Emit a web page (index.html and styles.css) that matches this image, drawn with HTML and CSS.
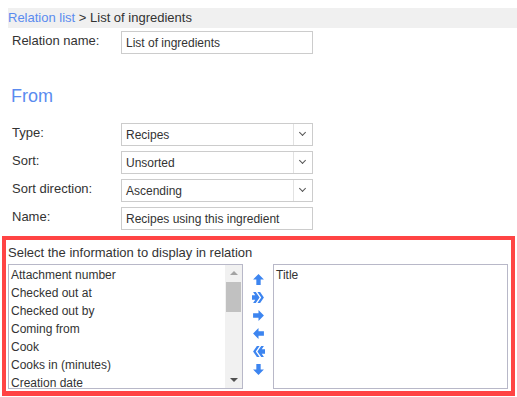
FILE: index.html
```html
<!DOCTYPE html>
<html lang="en">

<head>
    <meta charset="UTF-8">
    <title>Relation - List of ingredients</title>
    <link rel="stylesheet" href="styles.css">
</head>

<body>
    <div class="breadcrumb">
        <a href="#">Relation list</a> &gt; List of ingredients
    </div>
    <div class="row">
        <label>Relation name:</label>
        <input type="text" value="List of ingredients">
    </div>

    <h2>From</h2>

    <div class="row">
        <label>Type:</label>
        <div class="select"><span>Recipes</span><i></i></div>
    </div>
    <div class="row">
        <label>Sort:</label>
        <div class="select"><span>Unsorted</span><i></i></div>
    </div>
    <div class="row">
        <label>Sort direction:</label>
        <div class="select"><span>Ascending</span><i></i></div>
    </div>
    <div class="row">
        <label>Name:</label>
        <input type="text" value="Recipes using this ingredient">
    </div>

    <div class="picker">
        <div class="picker-title">Select the information to display in relation</div>
        <div class="picker-body">
            <div class="list">
                <div class="items">
                    <div>Attachment number</div>
                    <div>Checked out at</div>
                    <div>Checked out by</div>
                    <div>Coming from</div>
                    <div>Cook</div>
                    <div>Cooks in (minutes)</div>
                    <div>Creation date</div>
                </div>
                <div class="scrollbar">
                    <span class="up"></span>
                    <span class="thumb"></span>
                    <span class="down"></span>
                </div>
            </div>
            <div class="moves">
                <svg viewBox="0 0 12 12"><path d="M6 1 L11 6 H8 V11 H4 V6 H1 Z" /></svg>
                <svg viewBox="0 0 12 12"><path d="M0 4 H3 L1 1 H3.5 L7 6 L3.5 11 H1 L3 8 H0 Z M5 1 H7.5 L11 6 L7.5 11 H5 L8.5 6 Z" /></svg>
                <svg viewBox="0 0 12 12"><path d="M11 6 L6 11 V8 H1 V4 H6 V1 Z" /></svg>
                <svg viewBox="0 0 12 12"><path d="M1 6 L6 1 V4 H11 V8 H6 V11 Z" /></svg>
                <svg viewBox="0 0 12 12"><path d="M12 4 H9 L11 1 H8.5 L5 6 L8.5 11 H11 L9 8 H12 Z M7 1 H4.5 L1 6 L4.5 11 H7 L3.5 6 Z" /></svg>
                <svg viewBox="0 0 12 12"><path d="M6 11 L1 6 H4 V1 H8 V6 H11 Z" /></svg>
            </div>
            <div class="list chosen">
                <div class="items">
                    <div>Title</div>
                </div>
            </div>
        </div>
    </div>
</body>

</html>
```

FILE: styles.css
```css
body {
    font-family: "Liberation Sans", Arial, sans-serif;
    font-size: 13px;
    color: #333;
    margin: 8px 0 0 0;
    background-color: white;
}

.breadcrumb {
    background-color: #f0f0f0;
    margin-left: 8px;
    height: 20px;
    line-height: 20px;
    font-size: 13px;
    color: #333;
}

.breadcrumb a {
    color: #5a8bef;
    text-decoration: none;
}

.row {
    display: flex;
    align-items: flex-start;
    margin-left: 12px;
    margin-bottom: 5px;
}

.row label {
    width: 109px;
    line-height: 20px;
}

.row input,
.select {
    box-sizing: border-box;
    width: 192px;
    height: 23px;
    border: 1px solid #ccc;
    font-family: "Liberation Sans", Arial, sans-serif;
    font-size: 12px;
    color: #333;
    padding: 0 4px;
    margin: 0;
}

.breadcrumb + .row {
    margin-top: 3px;
}

.select {
    display: flex;
    align-items: center;
    padding: 0;
}

.select span {
    flex-grow: 1;
    padding-left: 4px;
}

.select i {
    width: 18px;
    height: 21px;
    border-left: 1px solid #e2e2e2;
    position: relative;
}

.select i::after {
    content: "";
    position: absolute;
    left: 6px;
    top: 6px;
    width: 4px;
    height: 4px;
    border-right: 1.5px solid #555;
    border-bottom: 1.5px solid #555;
    transform: rotate(45deg);
}

h2 {
    font-weight: normal;
    font-size: 18px;
    color: #5a8bef;
    margin: 32px 0 0 11px;
    height: 37px;
}

.picker {
    margin: 6px 2px 0 2px;
    border: 4px solid #ff4444;
    border-bottom-width: 5px;
    padding: 4px 3px 0 2px;
    height: 160px;
    box-sizing: border-box;
}

.picker-title {
    height: 20px;
    line-height: 18px;
    font-size: 13px;
}

.picker-body {
    display: flex;
    align-items: flex-start;
}

.list {
    box-sizing: border-box;
    width: 235px;
    height: 125px;
    border: 1px solid #b8b8c8;
    display: flex;
    overflow: hidden;
}

.items {
    flex-grow: 1;
    padding: 1px 2px;
    font-size: 12px;
}

.items div {
    height: 18px;
    line-height: 18px;
    white-space: nowrap;
}

.scrollbar {
    width: 17px;
    background-color: #f1f1f1;
    display: flex;
    flex-direction: column;
    align-items: center;
}

.scrollbar .up,
.scrollbar .down {
    width: 0;
    height: 0;
    border-left: 4px solid transparent;
    border-right: 4px solid transparent;
    margin: 6px 0;
}

.scrollbar .up {
    border-bottom: 4px solid #a3a3a3;
}

.scrollbar .down {
    border-top: 4px solid #505050;
    margin-top: auto;
}

.scrollbar .thumb {
    width: 15px;
    height: 30px;
    background-color: #c1c1c1;
    margin-top: 1px;
}

.moves {
    width: 30px;
    display: flex;
    flex-direction: column;
    align-items: center;
    padding-top: 9px;
    gap: 5px;
}

.moves svg {
    width: 13px;
    height: 13px;
    fill: #3d85f0;
}
```
